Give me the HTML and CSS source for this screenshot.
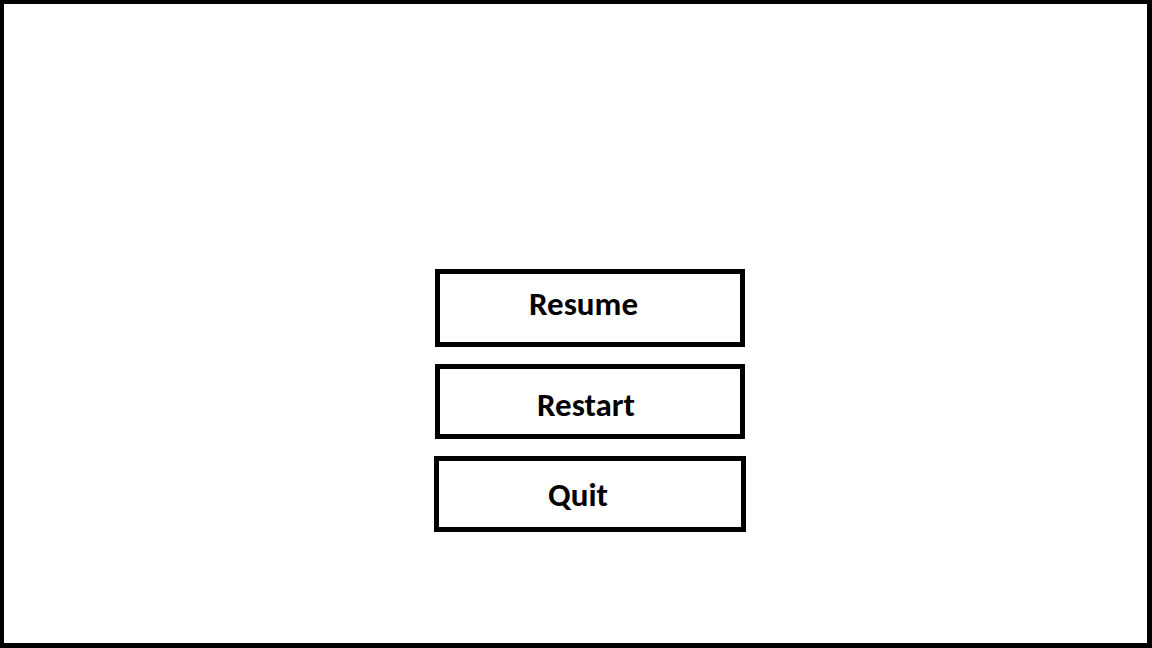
FILE: index.html
```html
<!DOCTYPE html>
<html lang="en">
<head>
<meta charset="utf-8">
<title>Pause menu</title>
<link rel="stylesheet" href="styles.css">
</head>
<body>
<main class="screen">
  <nav class="menu" aria-label="Pause menu">
    <button class="item resume" type="button">Resume</button>
    <button class="item restart" type="button">Restart</button>
    <button class="item quit" type="button">Quit</button>
  </nav>
</main>
</body>
</html>
```
FILE: styles.css
```css
* { box-sizing: border-box; }
body { margin: 0; background: #fff; }
.screen {
  min-height: 100vh;
  display: flex;
  flex-direction: column;
  align-items: center;
  justify-content: flex-end;
  padding: 0 0 111px 29px;
  border: solid #000;
  border-width: 4px 5px 5px 4px;
}
.menu {
  display: flex;
  flex-direction: column;
  align-items: center;
  gap: 17px;
}
.item {
  width: 310px;
  border: 5px solid #000;
  background: #fff;
  color: #000;
  font: bold 33px/36px Carlito, Calibri, Lato, "Open Sans", sans-serif;
  text-align: center;
}
.resume { padding: 12px 13px 20px 0; }
.restart { padding: 18px 8px 11px 0; }
.quit { width: 312px; padding: 16px 24px 14px 0; }
```
